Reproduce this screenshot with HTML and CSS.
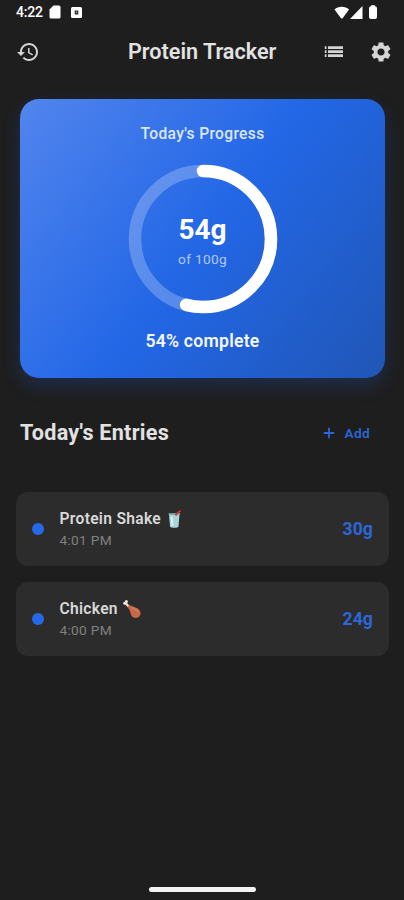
FILE: index.html
```html
<!DOCTYPE html>
<html lang="en">
<head>
    <meta charset="UTF-8">
    <meta name="viewport" content="width=device-width, initial-scale=1.0">
    <title>Protein Tracker</title>
    <link rel="stylesheet" href="styles.css">
</head>
<body>
    <div class="status-bar">
        <span class="clock">4:22</span>
        <svg class="sd-icon" width="12" height="14" viewBox="0 0 12 14"><path d="M4.5 0.5H10a1.5 1.5 0 0 1 1.5 1.5V12a1.5 1.5 0 0 1-1.5 1.5H2A1.5 1.5 0 0 1 .5 12V4.5z"/></svg>
        <svg class="app-icon" width="11" height="11" viewBox="0 0 11 11"><rect width="11" height="11" rx="1.5"/><path class="cutout" d="M3.7 3.5h3.6v4H3.7z"/><path d="M5 4.8h1v.8H5z"/></svg>
        <div class="signals">
            <svg width="16" height="13" viewBox="0 0 16 13"><path d="M0.500 3.500C4-.2 11.500-.2 15 3.500L8.800 12q-1 1.200-2 0z"/></svg>
            <svg width="13" height="13" viewBox="0 0 13 13"><path d="M12.500 0v13H0z"/></svg>
            <svg class="battery" width="8" height="14" viewBox="0 0 8 14"><path d="M2 1.200V.3h4v.9A2 2 0 0 1 8 3.200v8.800a2 2 0 0 1-2 2H2a2 2 0 0 1-2-2V3.200a2 2 0 0 1 2-2z"/></svg>
        </div>
    </div>

    <header class="app-bar">
        <button aria-label="History">
            <svg width="24" height="24" viewBox="0 0 24 24"><path d="M13 3c-4.970 0-9 4.030-9 9H1l3.890 3.890.07.14L9 12H6c0-3.870 3.130-7 7-7s7 3.130 7 7-3.130 7-7 7c-1.930 0-3.680-.79-4.940-2.060l-1.420 1.420C8.270 19.990 10.510 21 13 21c4.970 0 9-4.030 9-9s-4.030-9-9-9zm-1 5v5l4.280 2.540.72-1.210-3.500-2.080V8H12z"/></svg>
        </button>
        <h1>Protein Tracker</h1>
        <button aria-label="Entries">
            <svg width="24" height="24" viewBox="0 0 24 24"><path d="M2.800 6.300h1.700v2.700H2.800zM2.800 10.300h1.700v2.700H2.800zM2.800 14.300h1.700v2.700H2.800zM6 6.300h15v2.700H6zM6 10.300h15v2.700H6zM6 14.300h15v2.700H6z"/></svg>
        </button>
        <button class="settings" aria-label="Settings">
            <svg width="24" height="24" viewBox="0 0 24 24"><path d="M19.140 12.940c.04-.3.06-.61.06-.94s-.02-.64-.07-.94l2.030-1.580c.18-.14.23-.41.12-.61l-1.920-3.320c-.12-.22-.37-.29-.59-.22l-2.390.96c-.5-.38-1.030-.7-1.620-.94l-.36-2.540c-.04-.24-.24-.41-.48-.41h-3.840c-.24 0-.43.17-.47.41l-.36 2.540c-.59.24-1.130.57-1.620.94l-2.390-.96c-.22-.08-.47 0-.59.22L2.740 8.870c-.12.21-.08.47.12.61l2.030 1.580c-.05.3-.09.63-.09.94s.02.64.07.94l-2.030 1.580c-.18.14-.23.41-.12.61l1.920 3.320c.12.22.37.29.59.22l2.390-.96c.5.38 1.030.7 1.620.94l.36 2.540c.05.24.24.41.48.41h3.840c.24 0 .44-.17.47-.41l.36-2.540c.59-.24 1.130-.56 1.620-.94l2.390.96c.22.08.47 0 .59-.22l1.920-3.320c.12-.22.07-.47-.12-.61l-2.010-1.580zM12 15.600c-1.980 0-3.600-1.620-3.600-3.600s1.620-3.600 3.600-3.600 3.600 1.620 3.600 3.600-1.620 3.600-3.600 3.600z"/></svg>
        </button>
    </header>

    <section class="progress-card">
        <h2>Today's Progress</h2>
        <div class="ring">
            <svg width="150" height="150" viewBox="0 0 150 150">
                <circle class="track" cx="75" cy="75" r="68"/>
                <circle class="value" cx="75" cy="75" r="68" pathLength="100" stroke-dasharray="54 100" transform="rotate(-90 75 75)"/>
            </svg>
            <div class="ring-label">
                <strong>54g</strong>
                <span>of 100g</span>
            </div>
        </div>
        <p>54% complete</p>
    </section>

    <div class="entries-header">
        <h2>Today's Entries</h2>
        <button class="add">
            <svg width="12" height="12" viewBox="0 0 12 12"><path d="M5.100.8h1.800v4.300h4.300v1.800H6.900v4.300H5.100V6.900H.8V5.100h4.300z"/></svg>
            Add
        </button>
    </div>

    <ul class="entries">
        <li>
            <span class="dot"></span>
            <div class="info">
                <h3>Protein Shake
                    <svg class="emoji" width="18" height="20" viewBox="0 0 18 20">
                        <path d="M3 5h10.500l-1 12.500c-.2 1.700-8.300 1.700-8.500 0z" fill="#a9d5d8"/>
                        <path d="M4.500 7.500h2.200l.7 9.500-2-.5z" fill="#d8f1f0"/>
                        <path d="M2.600 4.200h11.400v1.700H2.600z" fill="#7caeb1"/>
                        <path d="M9.500 6.500L12 3.500 15 1.800" fill="none" stroke="#d52c39" stroke-width="1.700"/>
                    </svg>
                </h3>
                <p>4:01 PM</p>
            </div>
            <span class="grams">30g</span>
        </li>
        <li>
            <span class="dot"></span>
            <div class="info">
                <h3>Chicken
                    <svg class="emoji" width="18" height="20" viewBox="0 0 18 20">
                        <path d="M2.500 4L6.500 8.500" stroke="#eee0cc" stroke-width="2.400"/>
                        <circle cx="3.400" cy="2.600" r="1.500" fill="#f4e9dc"/>
                        <circle cx="1.700" cy="4.200" r="1.500" fill="#f4e9dc"/>
                        <path d="M5 7.500c1-1.800 2.500-1.500 4-.5 2 1.200 5 1.200 7.300 4 2 2.500 1.500 5.500-.6 7-2.200 1.600-5.500 1.200-7-1C7 14.500 7.600 13 6.500 11c-.8-1.400-2-2.300-1.500-3.500z" fill="#c76848"/>
                        <path d="M9.500 9c2 .8 4 1.400 5.300 3.500" fill="none" stroke="#d67b58" stroke-width="1.800" stroke-linecap="round"/>
                    </svg>
                </h3>
                <p>4:00 PM</p>
            </div>
            <span class="grams">24g</span>
        </li>
    </ul>

    <div class="home-indicator"></div>
</body>
</html>
```

FILE: styles.css
```css
* {
    box-sizing: border-box;
}

body {
    margin: 0;
    height: 900px;
    display: flex;
    flex-direction: column;
    overflow: hidden;
    background: #1e1e1e;
    color: #e2e2e2;
    font-family: Roboto, "Liberation Sans", sans-serif;
}

h1, h2, h3, p {
    margin: 0;
}

svg {
    display: block;
    fill: currentColor;
    flex: none;
}

button {
    display: flex;
    align-items: center;
    padding: 0;
    border: none;
    background: none;
    color: #d4d4d6;
    font-family: inherit;
}

.status-bar {
    display: flex;
    align-items: center;
    height: 24px;
    padding: 0 27px 0 16px;
    color: #fff;
}

.clock {
    width: 27px;
    font-size: 14px;
    font-weight: 500;
    letter-spacing: -0.2px;
}

.sd-icon {
    margin-left: 6px;
}

.app-icon {
    margin-left: 10px;
}

.cutout {
    fill: #333;
}

.signals {
    display: flex;
    align-items: center;
    margin-left: auto;
}

.battery {
    margin-left: 6px;
}

.app-bar {
    display: flex;
    align-items: center;
    height: 55px;
    padding: 0 11px 0 16px;
}

.app-bar h1 {
    flex: 1;
    padding-left: 2px;
    margin-left: 86px;
    font-size: 21.6px;
    font-weight: 600;
    line-height: 26px;
    white-space: nowrap;
}

.settings {
    margin-left: 23px;
}

.progress-card {
    display: flex;
    flex-direction: column;
    align-items: center;
    flex: none;
    width: 365px;
    height: 279px;
    margin: 20px 0 0 20px;
    padding-top: 24px;
    border-radius: 19px;
    background: linear-gradient(127deg, #5285ee 0%, #2367e6 50%, #2056b6 100%);
    box-shadow: 0 8px 18px rgba(37, 99, 235, 0.22);
}

.progress-card h2 {
    font-size: 15.6px;
    font-weight: 500;
    line-height: 22px;
    letter-spacing: 0.33px;
    color: #dce7fc;
}

.ring {
    display: grid;
    place-items: center;
    width: 150px;
    height: 150px;
    margin-top: 18.5px;
}

.ring > * {
    grid-area: 1 / 1;
}

.ring circle {
    fill: none;
    stroke-width: 12.5;
}

.track {
    stroke: rgba(255, 255, 255, 0.24);
}

.value {
    stroke: #fff;
    stroke-linecap: round;
}

.ring-label {
    display: flex;
    flex-direction: column;
    align-items: center;
    padding-top: 4px;
}

.ring-label strong {
    font-size: 28px;
    font-weight: 700;
    line-height: 36px;
    color: #fff;
}

.ring-label span {
    font-size: 13.7px;
    line-height: 22px;
    letter-spacing: 0.3px;
    color: #b1c8f5;
}

.progress-card p {
    margin-top: 15.5px;
    font-size: 17.6px;
    font-weight: 600;
    line-height: 24px;
    letter-spacing: 0.25px;
    color: #f4f7ff;
}

.entries-header {
    display: flex;
    align-items: center;
    justify-content: space-between;
    height: 50px;
    margin-top: 30px;
    padding: 0 34px 0 20px;
}

.entries-header h2 {
    padding-bottom: 1px;
    font-size: 21.6px;
    font-weight: 700;
    letter-spacing: 0.25px;
}

.add {
    gap: 10px;
    color: #2b66d6;
    font-size: 13.7px;
    font-weight: 600;
    letter-spacing: 0.3px;
}

.entries {
    display: flex;
    flex-direction: column;
    gap: 16px;
    margin: 33.5px 15px 0 16px;
    padding: 0;
    list-style: none;
}

.entries li {
    display: flex;
    align-items: center;
    height: 74px;
    padding: 0 16px;
    border-radius: 12px;
    background: #2c2c2c;
}

.dot {
    width: 12px;
    height: 12px;
    border-radius: 50%;
    background: #2569e8;
}

.info {
    flex: 1;
    margin-left: 15.5px;
}

.info h3 {
    display: flex;
    align-items: center;
    gap: 5px;
    font-size: 15.6px;
    font-weight: 600;
    line-height: 22px;
    letter-spacing: 0.3px;
    color: #d8d8d8;
}

.info p {
    font-size: 13.7px;
    line-height: 20px;
    letter-spacing: 0.3px;
    color: #808080;
}

.grams {
    font-size: 17.6px;
    font-weight: 700;
    letter-spacing: 0.1px;
    color: #2c67d8;
}

.home-indicator {
    width: 107px;
    height: 5px;
    margin: auto auto 8px 149px;
    border-radius: 3px;
    background: #f2f2f2;
}
```
